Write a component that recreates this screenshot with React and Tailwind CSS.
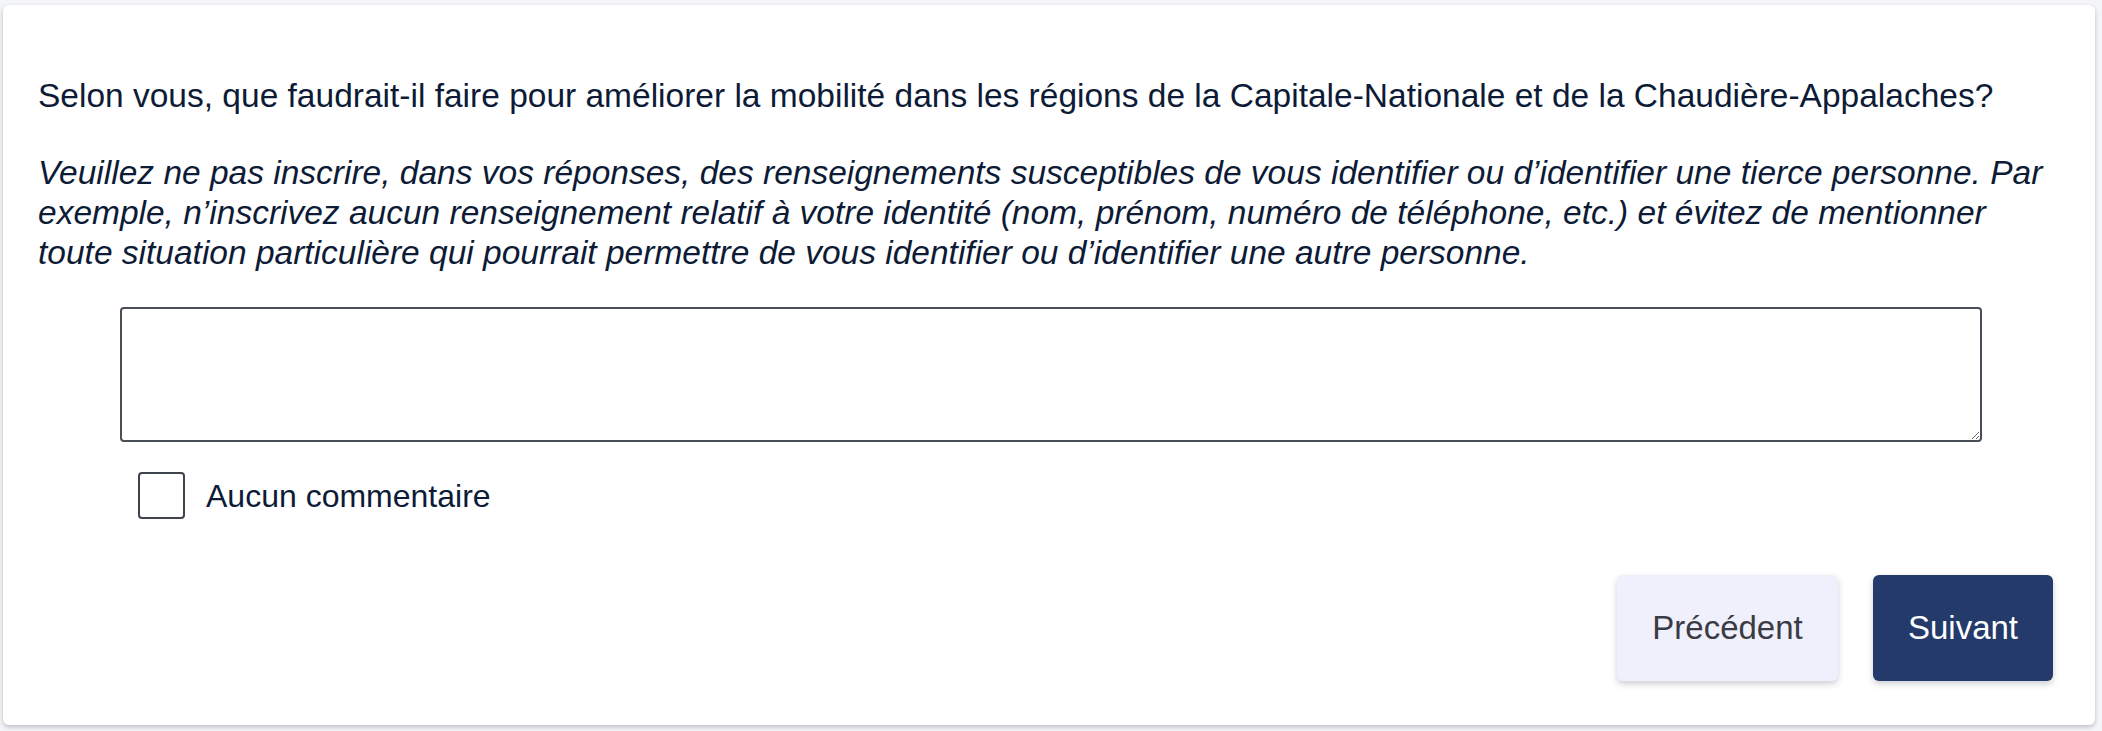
import React, { useState } from 'react';

const font = { fontFamily: '"Liberation Sans", Arial, sans-serif' };

export default function App() {
  const [noComment, setNoComment] = useState(false);

  return (
    <div className="min-h-[731px] bg-[#f4f5f7] pt-[5px] pl-[3px] pr-[7px]" style={font}>
      <div className="rounded-md bg-white shadow-[0_2px_4px_rgba(60,64,90,0.3)] pl-[35px] pr-[42px] pt-[71px] pb-[44px] text-[#0d1b36]">
        <p className="text-[33.5px] leading-[40px]">
          Selon vous, que faudrait-il faire pour améliorer la mobilité dans les régions de la Capitale-Nationale et de la Chaudière-Appalaches?
        </p>

        <p className="mt-[37px] text-[33.5px] leading-[40px] italic">
          Veuillez ne pas inscrire, dans vos réponses, des renseignements susceptibles de vous identifier ou d’identifier une tierce personne. Par exemple, n’inscrivez aucun renseignement relatif à votre identité (nom, prénom, numéro de téléphone, etc.) et évitez de mentionner toute situation particulière qui pourrait permettre de vous identifier ou d’identifier une autre personne.
        </p>

        <textarea
          className="mt-[34px] ml-[82px] block w-[1862px] h-[135px] rounded-[4px] border-2 border-[#4a4e57] bg-white p-3 text-[28px] outline-none"
          aria-label="Commentaire"
        />

        <label className="mt-[30px] ml-[100px] flex w-fit items-center gap-[21px] cursor-pointer">
          <span className="flex h-[47px] w-[47px] items-center justify-center rounded-[4px] border-2 border-[#3f434b] bg-white">
            <input
              type="checkbox"
              className="sr-only"
              checked={noComment}
              onChange={(e) => setNoComment(e.target.checked)}
            />
            {noComment && <span className="text-[28px] leading-none">✓</span>}
          </span>
          <span className="text-[32px] leading-[40px]">Aucun commentaire</span>
        </label>

        <div className="mt-[56px] flex justify-end gap-[35px]">
          <button className="h-[106px] w-[221px] rounded-md bg-[#eff0fb] text-[33px] text-[#3a3b44] shadow-[0_3px_6px_rgba(60,64,90,0.25)]">
            Précédent
          </button>
          <button className="h-[106px] w-[180px] rounded-md bg-[#233a6b] text-[33px] text-white shadow-[0_3px_6px_rgba(60,64,90,0.25)]">
            Suivant
          </button>
        </div>
      </div>
    </div>
  );
}
